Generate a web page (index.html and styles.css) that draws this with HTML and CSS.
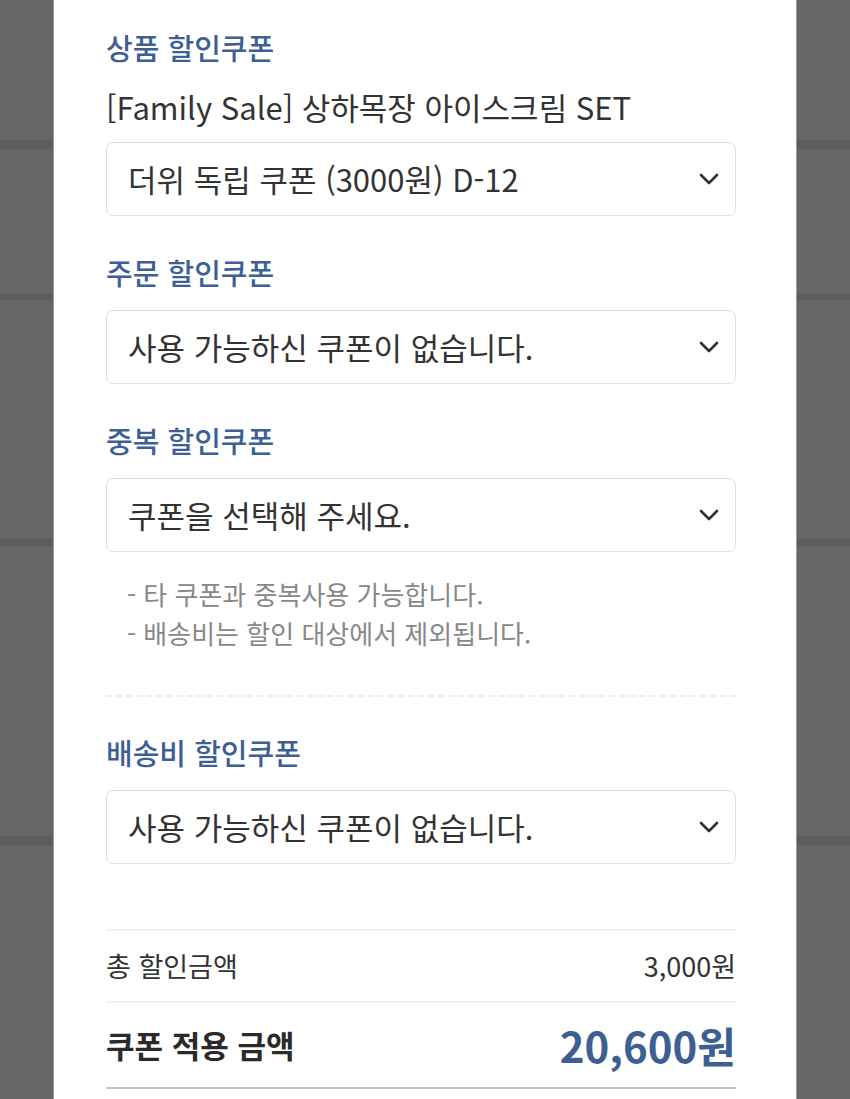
FILE: index.html
```html
<!DOCTYPE html>
<html lang="ko">
<head>
<meta charset="utf-8">
<title>쿠폰 적용</title>
<link rel="stylesheet" href="styles.css">
</head>
<body>
<div class="backdrop">
  <div class="bg-row h1"></div>
  <div class="bg-stripe s1"></div>
  <div class="bg-row h2"></div>
  <div class="bg-stripe s2"></div>
  <div class="bg-row h3"></div>
  <div class="bg-stripe s3"></div>
  <div class="bg-row h4"></div>
  <div class="bg-stripe s4"></div>
</div>
<div class="panel">
  <div class="content">
    <h2 class="sec-title first">상품 할인쿠폰</h2>
    <p class="product">[Family Sale] 상하목장 아이스크림 SET</p>
    <div class="select">
      <span class="select-text">더위 독립 쿠폰 (3000원) D-12</span>
      <svg class="chev" width="20" height="12" viewBox="0 0 20 12"><path d="M2 2 L10 10 L18 2" fill="none" stroke="#333" stroke-width="2.6" stroke-linecap="round" stroke-linejoin="round"/></svg>
    </div>

    <h2 class="sec-title">주문 할인쿠폰</h2>
    <div class="select">
      <span class="select-text">사용 가능하신 쿠폰이 없습니다.</span>
      <svg class="chev" width="20" height="12" viewBox="0 0 20 12"><path d="M2 2 L10 10 L18 2" fill="none" stroke="#333" stroke-width="2.6" stroke-linecap="round" stroke-linejoin="round"/></svg>
    </div>

    <h2 class="sec-title">중복 할인쿠폰</h2>
    <div class="select">
      <span class="select-text">쿠폰을 선택해 주세요.</span>
      <svg class="chev" width="20" height="12" viewBox="0 0 20 12"><path d="M2 2 L10 10 L18 2" fill="none" stroke="#333" stroke-width="2.6" stroke-linecap="round" stroke-linejoin="round"/></svg>
    </div>
    <ul class="notes">
      <li>- 타 쿠폰과 중복사용 가능합니다.</li>
      <li>- 배송비는 할인 대상에서 제외됩니다.</li>
    </ul>
    <div class="dashed"></div>

    <h2 class="sec-title">배송비 할인쿠폰</h2>
    <div class="select">
      <span class="select-text">사용 가능하신 쿠폰이 없습니다.</span>
      <svg class="chev" width="20" height="12" viewBox="0 0 20 12"><path d="M2 2 L10 10 L18 2" fill="none" stroke="#333" stroke-width="2.6" stroke-linecap="round" stroke-linejoin="round"/></svg>
    </div>

    <div class="summary">
      <div class="sum-row">
        <span class="sum-label">총 할인금액</span>
        <span class="sum-value">3,000원</span>
      </div>
      <div class="sum-row total">
        <span class="total-label">쿠폰 적용 금액</span>
        <span class="total-value">20,600원</span>
      </div>
    </div>
  </div>
</div>
</body>
</html>
```
FILE: styles.css
```css
* { box-sizing: border-box; }
html, body { margin: 0; padding: 0; }
body {
  width: 850px;
  height: 1099px;
  overflow: hidden;
  background: #666666;
  font-family: "Noto Sans CJK KR", "Noto Sans", sans-serif;
  position: relative;
}
.backdrop { display: flex; flex-direction: column; }
.bg-row { background: #666666; }
.bg-stripe { background: #5d5d5d; }
.h1 { height: 140px; }
.s1 { height: 9px; }
.h2 { height: 145px; }
.s2 { height: 6px; }
.h3 { height: 238px; }
.s3 { height: 8px; }
.h4 { height: 290px; }
.s4 { height: 10px; }

.panel {
  position: absolute;
  top: 0;
  left: 53px;
  width: 744px;
  height: 1099px;
  background: #fff;
  border-left: 1px solid #9c9c9c;
  border-right: 1px solid #9c9c9c;
}
.content {
  width: 630px;
  margin-left: 52px;
  display: flex;
  flex-direction: column;
}
.sec-title {
  margin: 38px 0 20px;
  font-size: 29px;
  font-weight: 500;
  color: #3e5f93;
  line-height: 36px;
}
.sec-title.first { margin-top: 29px; margin-bottom: 24px; }
.product {
  margin: 0 0 17px;
  font-size: 31px;
  color: #333;
  line-height: 36px;
}
.select {
  height: 74px;
  border: 1px solid #dedede;
  border-radius: 7px;
  display: flex;
  align-items: center;
  justify-content: space-between;
  padding: 0 16px 0 21px;
}
.select-text {
  font-size: 31px;
  color: #333;
  line-height: 36px;
}
.chev { display: block; }
.notes {
  list-style: none;
  margin: 22px 0 0;
  padding: 0 0 0 21px;
}
.notes li {
  font-size: 26px;
  color: #888;
  line-height: 39px;
}
.dashed {
  margin-top: 43px;
  height: 0;
  border-top: 2px dashed #eeeeee;
}
.dashed + .sec-title { margin-top: 37px; }
.summary {
  margin-top: 65px;
  border-top: 2px solid #f0f0f0;
}
.sum-row {
  display: flex;
  justify-content: space-between;
  align-items: center;
  height: 72px;
  border-bottom: 2px solid #f0f0f0;
}
.sum-label, .sum-value {
  font-size: 27px;
  color: #333;
  line-height: 36px;
}
.sum-row.total {
  height: 86px;
  border-bottom: 2px solid #c4c4c4;
}
.total-label {
  font-size: 31px;
  font-weight: 700;
  color: #2a2a2a;
  line-height: 40px;
}
.total-value {
  font-size: 42px;
  font-weight: 700;
  color: #3e5f93;
  line-height: 50px;
}
```
